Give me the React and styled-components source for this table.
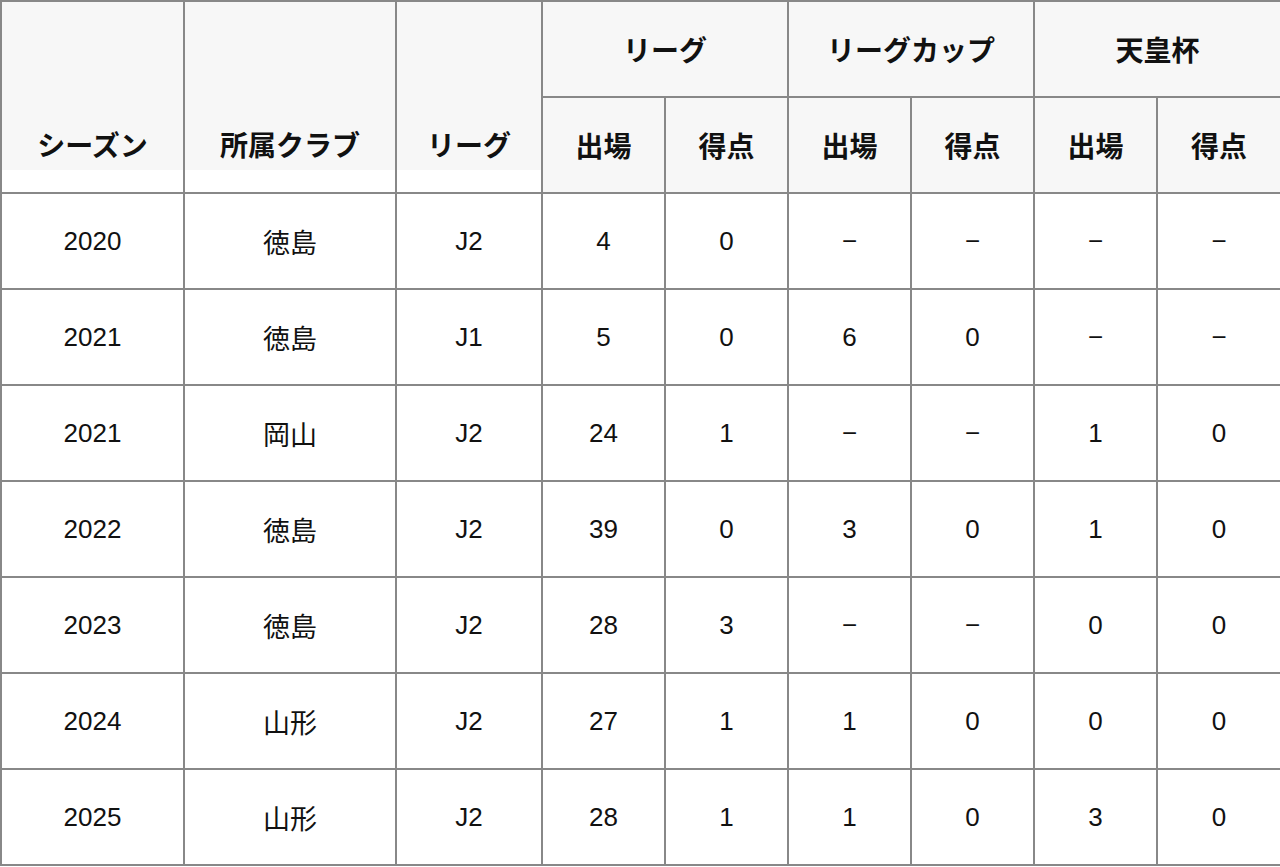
import React from 'react'
import styled, { createGlobalStyle } from 'styled-components'

const GlobalStyle = createGlobalStyle`
    html, body {
        margin: 0;
        padding: 0;
        background: #fff;
    }
    body {
        font-family: "Liberation Sans", "Noto Sans CJK JP", sans-serif;
        color: #111;
    }
`

const Table = styled.table`
    width: 1280px;
    border-collapse: collapse;
    table-layout: fixed;
    border: 2px solid #888;
    text-align: center;
`

const HeadCell = styled.th`
    border: 2px solid #888;
    height: 94px;
    padding: 0;
    font-family: "Noto Sans CJK JP", sans-serif;
    font-weight: 700;
    font-size: 28px;
    line-height: 1.3;
    background: #f7f7f7;
    vertical-align: middle;
`

// rowspan cells: text sits on the lower row, grey stops short of the bottom line
const TallHeadCell = styled(HeadCell)`
    vertical-align: bottom;
    padding-bottom: 30px;
    background: linear-gradient(to bottom, #f7f7f7 0, #f7f7f7 168px, #fff 168px);
`

const Cell = styled.td`
    border: 2px solid #888;
    height: 94px;
    padding: 0;
    font-size: 26px;
    background: #fff;
`

const ClubCell = styled(Cell)`
    font-family: "Noto Sans CJK JP", sans-serif;
    font-size: 27px;
`

const widths = [183, 212, 146, 123, 123, 123, 123, 123, 124]

const rows = [
    ['2020', '徳島', 'J2', '4', '0', '−', '−', '−', '−'],
    ['2021', '徳島', 'J1', '5', '0', '6', '0', '−', '−'],
    ['2021', '岡山', 'J2', '24', '1', '−', '−', '1', '0'],
    ['2022', '徳島', 'J2', '39', '0', '3', '0', '1', '0'],
    ['2023', '徳島', 'J2', '28', '3', '−', '−', '0', '0'],
    ['2024', '山形', 'J2', '27', '1', '1', '0', '0', '0'],
    ['2025', '山形', 'J2', '28', '1', '1', '0', '3', '0'],
]

const groups = ['リーグ', 'リーグカップ', '天皇杯']

export default function App() {
    return (
        <>
            <GlobalStyle />
            <Table>
                <colgroup>
                    {widths.map((w, i) => <col key={i} style={{ width: w }} />)}
                </colgroup>
                <thead>
                    <tr>
                        <TallHeadCell rowSpan={2}>シーズン</TallHeadCell>
                        <TallHeadCell rowSpan={2}>所属クラブ</TallHeadCell>
                        <TallHeadCell rowSpan={2}>リーグ</TallHeadCell>
                        {groups.map(g => <HeadCell key={g} colSpan={2}>{g}</HeadCell>)}
                    </tr>
                    <tr>
                        {groups.map(g => (
                            <React.Fragment key={g}>
                                <HeadCell>出場</HeadCell>
                                <HeadCell>得点</HeadCell>
                            </React.Fragment>
                        ))}
                    </tr>
                </thead>
                <tbody>
                    {rows.map((r, i) => (
                        <tr key={i}>
                            {r.map((v, j) => j === 1
                                ? <ClubCell key={j}>{v}</ClubCell>
                                : <Cell key={j}>{v}</Cell>)}
                        </tr>
                    ))}
                </tbody>
            </Table>
        </>
    )
}
